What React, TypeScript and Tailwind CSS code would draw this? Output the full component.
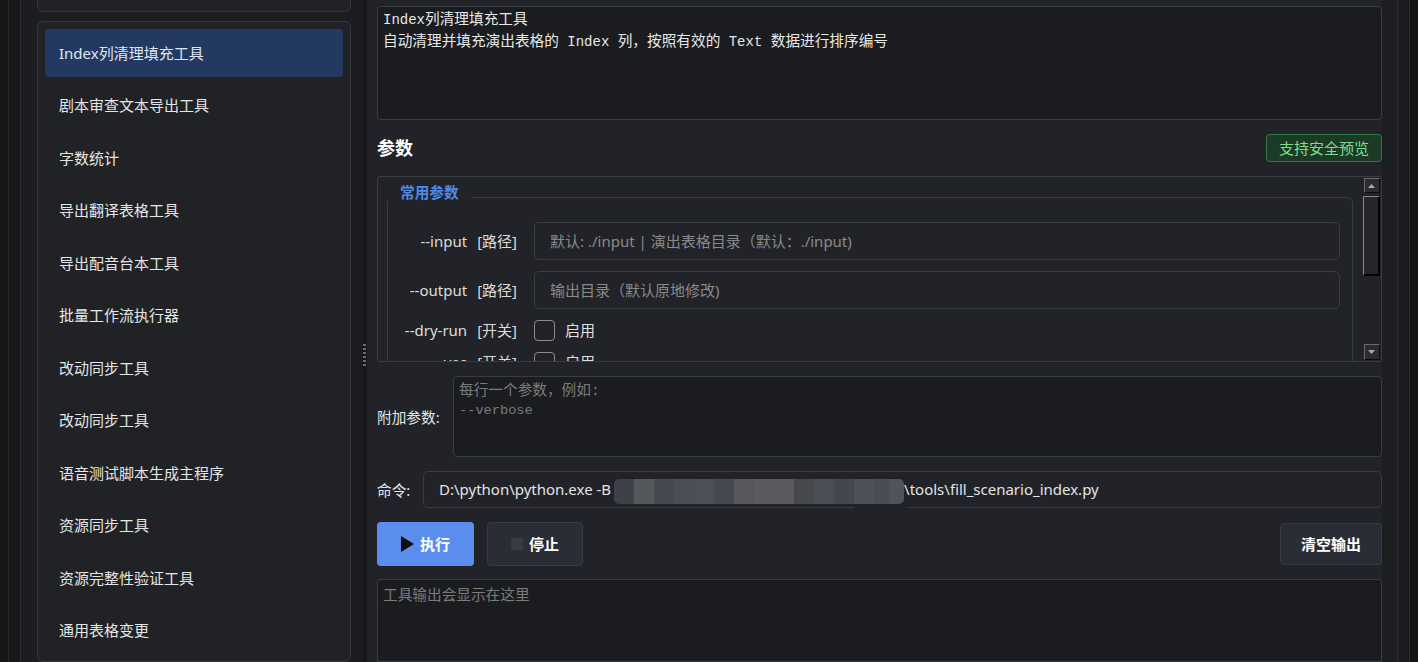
import React from "react";

const UI = "font-['Noto_Sans','Noto_Sans_CJK_SC',sans-serif]";
const MONO = "font-['Liberation_Mono','Noto_Sans_CJK_SC',monospace]";

const tools = [
  "Index列清理填充工具",
  "剧本审查文本导出工具",
  "字数统计",
  "导出翻译表格工具",
  "导出配音台本工具",
  "批量工作流执行器",
  "改动同步工具",
  "改动同步工具",
  "语音测试脚本生成主程序",
  "资源同步工具",
  "资源完整性验证工具",
  "通用表格变更",
];

// redacted path segment, drawn as a block mosaic
const mosaic: [string, number][] = [
  ["#3e4147", 20],
  ["#55575b", 20],
  ["#464a50", 20],
  ["#4b4e54", 20],
  ["#4d5057", 20],
  ["#46494f", 20],
  ["#56585c", 20],
  ["#5a5b5f", 40],
  ["#46484d", 20],
  ["#4b4e55", 20],
  ["#44474d", 20],
  ["#4e5157", 20],
  ["#4a4d54", 15],
  ["#50535a", 15],
];

function Sidebar() {
  return (
    <div className="w-[341px] shrink-0 bg-[#1c1d20] flex flex-col pl-[16px] pr-[11px]">
      <div className="h-[12px] shrink-0 border-x border-b border-[#34363c] bg-[#202226] rounded-b-[6px]" />
      <div className="mt-[9px] flex-1 border border-[#34363c] bg-[#202226] rounded-[6px] px-[7px] pt-[7px] flex flex-col gap-[4.5px] overflow-hidden">
        {tools.map((t, i) => (
          <div
            key={i}
            className={
              i === 0
                ? "h-[48px] shrink-0 rounded-[4px] bg-[#243961] pl-[14px] flex items-center text-[15px] text-[#dfe7f6]"
                : "h-[48px] shrink-0 rounded-[4px] pl-[14px] flex items-center text-[15px] text-[#e6e6e6]"
            }
          >
            {t}
          </div>
        ))}
      </div>
    </div>
  );
}

function Splitter() {
  return (
    <div className="w-[5px] shrink-0 bg-[#17181b] flex flex-col items-center">
      <div className="mt-[344px] flex flex-col gap-[2px]">
        {[0, 1, 2, 3, 4, 5].map((i) => (
          <div key={i} className="w-[3px] h-[2px] bg-[#6a6a6a]" />
        ))}
      </div>
    </div>
  );
}

function ScrollBar() {
  return (
    <div className="w-[17px] shrink-0 flex flex-col items-center pt-[1px] pb-[1px] mr-[1px]">
      <div className="w-[16px] h-[15px] shrink-0 border-t border-l border-[#6b6b6b] border-r-[#0c0c0c] border-b-[#0c0c0c] border-r border-b bg-[#2a2c31] flex items-center justify-center">
        <svg width="7" height="4" viewBox="0 0 7 4">
          <path d="M0 4 L3.5 0 L7 4 Z" fill="#a9a9a9" />
        </svg>
      </div>
      <div className="mt-[3px] w-[17px] h-[80px] shrink-0 border-t border-l border-[#8a8a8a] border-r-2 border-b-2 border-r-[#050505] border-b-[#050505] bg-[#24262b]" />
      <div className="flex-1" />
      <div className="w-[16px] h-[16px] shrink-0 border-t border-l border-[#6b6b6b] border-r-[#0c0c0c] border-b-[#0c0c0c] border-r border-b bg-[#2a2c31] flex items-center justify-center">
        <svg width="7" height="4" viewBox="0 0 7 4">
          <path d="M0 0 L3.5 4 L7 0 Z" fill="#a9a9a9" />
        </svg>
      </div>
    </div>
  );
}

function ParamLabel({ name, kind }: { name: string; kind: string }) {
  return (
    <div className="w-[129px] shrink-0 flex justify-end gap-[10px] text-[15px] text-[#dcdcdc] whitespace-nowrap">
      <span>{name}</span>
      <span>{kind}</span>
    </div>
  );
}

function PathRow({ name, placeholder }: { name: string; placeholder: string }) {
  return (
    <div className="h-[38px] shrink-0 flex items-center gap-[17px]">
      <ParamLabel name={name} kind="[路径]" />
      <div className="flex-1 h-[38px] border border-[#3a3d43] rounded-[5px] flex items-center pl-[15px] text-[15px] text-[#8a8a8a] whitespace-nowrap">
        {placeholder}
      </div>
    </div>
  );
}

function SwitchRow({ name }: { name: string }) {
  return (
    <div className="h-[21px] shrink-0 flex items-center gap-[17px]">
      <ParamLabel name={name} kind="[开关]" />
      <div className="flex items-center gap-[10px]">
        <div className="w-[21px] h-[21px] border-[1.5px] border-[#8b8b8b] rounded-[4px]" />
        <span className="text-[15px] text-[#e0e0e0]">启用</span>
      </div>
    </div>
  );
}

function Params() {
  return (
    <div className="mt-[14px] h-[186px] shrink-0 border border-[#393c42] rounded-[3px] flex overflow-hidden">
      <div className="flex-1 overflow-hidden pl-[9px] pr-[10px] pt-[20px]">
        <div className="relative border border-[#393c42] rounded-[6px] pt-[24px] pr-[12px] pb-[14px] flex flex-col gap-[11px]">
          <span className="absolute left-[0px] top-[-16px] bg-[#212328] pl-[12px] pr-[12px] text-[14.67px] leading-[20px] font-bold text-[#4f8ae6]">
            常用参数
          </span>
          <PathRow name="--input" placeholder="默认: ./input | 演出表格目录（默认：./input)" />
          <PathRow name="--output" placeholder="输出目录（默认原地修改)" />
          <SwitchRow name="--dry-run" />
          <SwitchRow name="--yes" />
        </div>
      </div>
      <ScrollBar />
    </div>
  );
}

function RightPane() {
  return (
    <div className="w-[1015px] shrink-0 bg-[#212328] pl-[10px] pt-[6px] flex flex-col">
      {/* tool description */}
      <div className={`h-[114px] shrink-0 border border-[#393c42] rounded-[4px] bg-[#1a1c20] px-[5px] pt-[2px] text-[14.67px] leading-[22px] text-[#e8e8e8] ${MONO}`}>
        <div>
          <span className="text-[14px]">Index</span>列清理填充工具
        </div>
        <div>
          自动清理并填充演出表格的<span className="text-[14px]"> Index </span>列，按照有效的<span className="text-[14px]"> Text </span>数据进行排序编号
        </div>
      </div>

      {/* section header */}
      <div className="mt-[14px] h-[28px] shrink-0 flex items-center justify-between">
        <span className="text-[18px] font-bold text-white">参数</span>
        <span className="h-[28px] px-[12px] flex items-center border border-[#2d7c43] bg-[#1c3a26] rounded-[4px] text-[15px] text-[#7ddf8d]">
          支持安全预览
        </span>
      </div>

      <Params />

      {/* extra args */}
      <div className="mt-[14px] h-[81px] shrink-0 flex items-center">
        <span className="w-[76px] shrink-0 text-[14.67px] text-[#e6e6e6]">附加参数:</span>
        <div className={`flex-1 h-[81px] border border-[#393c42] rounded-[4px] bg-[#1a1c20] px-[5px] pt-[4px] text-[14.67px] leading-[20px] text-[#7b7b7b] ${MONO}`}>
          <div>每行一个参数，例如:</div>
          <div className="text-[13.67px]">--verbose</div>
        </div>
      </div>

      {/* command preview */}
      <div className="mt-[14px] h-[37px] shrink-0 flex items-center">
        <span className="w-[46px] shrink-0 text-[14.67px] text-[#e6e6e6]">命令:</span>
        <div className="relative flex-1 h-[37px] border border-[#393c42] rounded-[5px] pl-[15px] flex items-center text-[15px] text-[#e4e4e4] whitespace-nowrap">
          <span>D:\python\python.exe -B</span>
          <span className="mt-[4px] ml-[3px] h-[25px] w-[290px] shrink-0 flex overflow-hidden rounded-[5px]">
            {mosaic.map(([c, w], i) => (
              <span key={i} className="h-full shrink-0" style={{ backgroundColor: c, width: w }} />
            ))}
          </span>
          <span>\tools\fill_scenario_index.py</span>
          <span className="absolute left-[430px] bottom-[-1px] w-[53px] h-[2px] bg-[#212328]" />
        </div>
      </div>

      {/* actions */}
      <div className="mt-[14px] h-[44px] shrink-0 flex items-center">
        <button className="w-[97px] h-[44px] rounded-[4px] bg-[#5b8def] flex items-center justify-center gap-[6px] text-[15px] font-bold text-white">
          <svg width="13" height="16" viewBox="0 0 13 16">
            <path d="M0 0 L13 8 L0 16 Z" fill="#0d0d0d" />
          </svg>
          执行
        </button>
        <button className="ml-[13px] w-[96px] h-[44px] rounded-[4px] bg-[#2a2d35] border border-[#383b43] flex items-center justify-center gap-[6px] text-[15px] font-bold text-white">
          <span className="w-[12px] h-[12px] bg-[#3b3c40]" />
          停止
        </button>
        <div className="flex-1" />
        <button className="w-[102px] h-[42px] rounded-[4px] bg-[#2a2d35] border border-[#383b43] flex items-center justify-center text-[15px] font-bold text-white">
          清空输出
        </button>
      </div>

      {/* output log */}
      <div className={`mt-[13px] flex-1 border border-[#393c42] rounded-t-[4px] bg-[#1a1c20] px-[5px] pt-[6px] text-[14.67px] leading-[20px] text-[#7b7b7b] ${MONO}`}>
        工具输出会显示在这里
      </div>
    </div>
  );
}

export default function App() {
  return (
    <div className={`w-[1418px] h-[662px] overflow-hidden flex bg-[#151515] ${UI}`}>
      <div className="w-[9px] shrink-0 bg-[#161616] border-r border-[#2a2a2a]" />
      <div className="w-[12px] shrink-0 bg-[#161719] border-r border-[#2c2d31]" />
      <Sidebar />
      <Splitter />
      <RightPane />
      <div className="w-[15px] shrink-0 bg-[#1d1e22]" />
      <div className="w-[13px] shrink-0 bg-[#1b1c1f] border-x border-[#2b2c30]" />
      <div className="flex-1 bg-[#151515]" />
    </div>
  );
}
